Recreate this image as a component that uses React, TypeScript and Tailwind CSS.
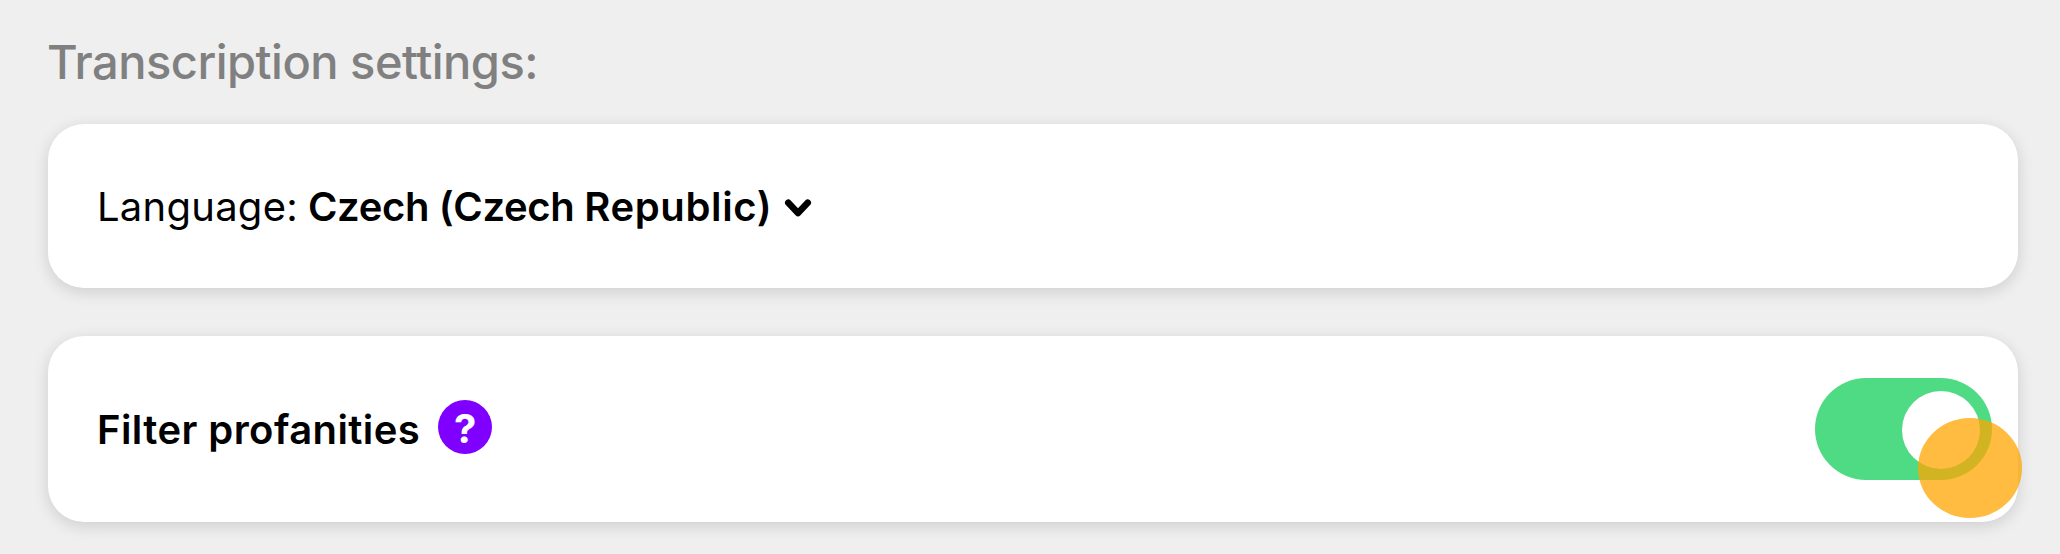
import React from 'react';

const LanguageCard: React.FC = () => (
    <div className="h-[164px] bg-white rounded-[36px] px-12 flex items-center text-[40px] leading-[48px] text-black shadow-[0_4px_16px_rgba(0,0,0,0.14)]">
        <span className="pl-px mt-px tracking-[0.25px]">Language:</span>
        <button className="ml-[10px] mt-px flex items-center font-semibold whitespace-pre">
            <span className="tracking-[-0.35px]">Czech (Czech </span>
            <span className="tracking-[0.65px]">Republic)</span>
            <svg className="ml-[12px] mt-[2px]" width="28" height="20" viewBox="0 0 28 20" fill="none" stroke="currentColor" strokeWidth="6.6" strokeLinecap="round" strokeLinejoin="round">
                <path d="M4.3 4.7l9.7 10.3L23.7 4.7" />
            </svg>
        </button>
    </div>
);

const ProfanityCard: React.FC = () => (
    <div className="relative h-[186px] bg-white rounded-[36px] pl-12 pr-[26px] flex items-center justify-between text-black shadow-[0_4px_16px_rgba(0,0,0,0.14)]">
        <div className="flex items-center">
            <span className="pl-px mt-px text-[40px] leading-[48px] font-semibold tracking-[0.42px]">Filter profanities</span>
            <span className="ml-[18px] -mt-[4px] size-[54px] rounded-full bg-[#7f00ff] text-white text-[40px] font-bold flex items-center justify-center">
                <span className="mt-[3px]">?</span>
            </span>
        </div>
        <div className="w-[177px] h-[102px] rounded-full bg-[#4edb83] flex items-center justify-end pr-[12px]">
            <span className="mt-[2px] size-[78px] rounded-full bg-white" />
        </div>
        {/* Tap indicator */}
        <span className="absolute -right-[4px] bottom-[4px] w-[104px] h-[100px] rounded-[50%] bg-[#ffa500]/75" />
    </div>
);

const App: React.FC = () => {
    return (
        <main className="h-[554px] bg-[#efefef] pl-12 pr-[42px] pt-[32px] overflow-hidden font-['Inter',sans-serif]">
            <h1 className="h-[92px] -ml-px text-[47px] leading-[60px] font-medium tracking-[-0.5px] text-[#808080]">Transcription settings:</h1>
            <div className="flex flex-col gap-12">
                <LanguageCard />
                <ProfanityCard />
            </div>
        </main>
    );
};

export default App;
